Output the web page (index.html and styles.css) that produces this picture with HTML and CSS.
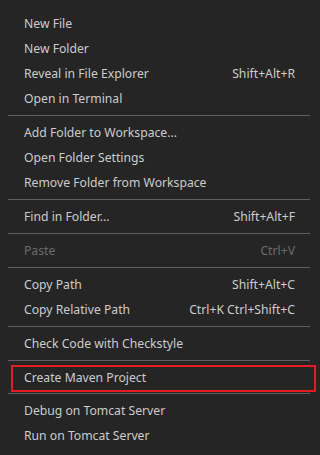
FILE: index.html
```html
<!DOCTYPE html>
<html lang="en">
<head>
  <meta charset="UTF-8" />
  <title>Explorer Context Menu</title>
  <link rel="stylesheet" href="styles.css">
</head>
<body>
  <div class="context-menu">
    <div class="menu-item"><span class="label">New File</span></div>
    <div class="menu-item"><span class="label">New Folder</span></div>
    <div class="menu-item"><span class="label">Reveal in File Explorer</span><span class="keys">Shift+Alt+R</span></div>
    <div class="menu-item"><span class="label">Open in Terminal</span></div>
    <div class="separator"></div>

    <div class="menu-item"><span class="label">Add Folder to Workspace...</span></div>
    <div class="menu-item"><span class="label">Open Folder Settings</span></div>
    <div class="menu-item"><span class="label">Remove Folder from Workspace</span></div>
    <div class="separator"></div>

    <div class="menu-item"><span class="label">Find in Folder...</span><span class="keys">Shift+Alt+F</span></div>
    <div class="separator"></div>

    <div class="menu-item disabled"><span class="label">Paste</span><span class="keys">Ctrl+V</span></div>
    <div class="separator"></div>

    <div class="menu-item"><span class="label">Copy Path</span><span class="keys">Shift+Alt+C</span></div>
    <div class="menu-item"><span class="label">Copy Relative Path</span><span class="keys">Ctrl+K Ctrl+Shift+C</span></div>
    <div class="separator"></div>

    <div class="menu-item"><span class="label">Check Code with Checkstyle</span></div>
    <div class="separator"></div>

    <div class="menu-item marked"><span class="label">Create Maven Project</span></div>
    <div class="separator tight"></div>

    <div class="menu-item"><span class="label">Debug on Tomcat Server</span></div>
    <div class="menu-item"><span class="label">Run on Tomcat Server</span></div>
  </div>
</body>
</html>
```

FILE: styles.css
```css
* {
  margin: 0;
  padding: 0;
  box-sizing: border-box;
}
html, body {
  width: 320px;
  height: 455px;
  background: #252526;
  overflow: hidden;
}
body {
  font-family: 'Segoe UI', 'Noto Sans', sans-serif;
  font-size: 12.2px;
  color: #cccccc;
}

.context-menu {
  display: flex;
  flex-direction: column;
  padding: 11px 0 0;
}

.menu-item {
  position: relative;
  display: flex;
  align-items: center;
  justify-content: space-between;
  height: 25px;
  padding: 0 25px 0 24px;
  white-space: nowrap;
}
.menu-item.disabled {
  color: #6b6b6b;
}

/* красная рамка-пометка поверх пункта */
.menu-item.marked::after {
  content: '';
  position: absolute;
  left: 11px;
  right: 4px;
  top: 0;
  bottom: -2px;
  border: 2px solid #e51c23;
}

.separator {
  height: 1px;
  margin: 4px 0 4px 8px;
  width: 302px;
  background: #5f5f5f;
}
.separator.tight {
  margin-top: 2.5px;
}
```
